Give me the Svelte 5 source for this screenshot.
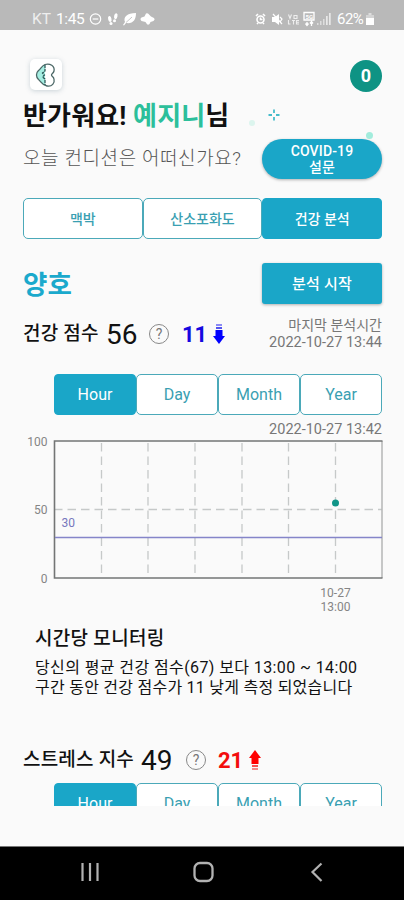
<script>
	const tabs = ['맥박', '산소포화도', '건강 분석'];
	const periods = ['Hour', 'Day', 'Month', 'Year'];
	const gridX = [47.5, 94, 141, 188, 234.5, 281.5];

	let tab = '건강 분석';
	let period = 'Hour';
	let stressPeriod = 'Hour';
</script>

<div class="phone">
	<div class="status">
		<span class="carrier">KT</span>
		<span class="time">1:45</span>
		<svg class="status-left" width="68" height="16" viewBox="0 0 68 16">
			<g fill="none" stroke="#fff" stroke-width="1.2">
				<circle cx="6.5" cy="8" r="5.2" />
				<path d="M3.7 8h5.6" />
			</g>
			<g fill="#fff">
				<ellipse cx="20.8" cy="8" rx="1.7" ry="3" transform="rotate(-12 20.8 8)" />
				<circle cx="22" cy="12.5" r="1.5" />
				<ellipse cx="26.8" cy="5.2" rx="1.7" ry="3" transform="rotate(12 26.8 5.2)" />
				<circle cx="25.5" cy="9.8" r="1.5" />
				<path d="M47 2C38 2 34 6 36 11l-2 3 1 .5 2-2.500C44 13 47 9 47 2z" />
				<path d="M57 2.500q2-1 3.500 1.500l1.500 1.500 3 1.500q1.500 1.500-.5 3l-3 1-1 2q-2 1.500-3-.5l-1-1.500-4-1q-2-2 0-3.500l3-1z" />
			</g>
			<path d="M37 11.500L43 6" stroke="#b9b9b9" stroke-width=".8" />
		</svg>
		<svg class="status-right" width="78" height="18" viewBox="0 0 78 18">
			<g fill="none" stroke="#fff" stroke-width="1.6">
				<circle cx="5.500" cy="9.500" r="3.500" />
				<path d="M1 6l2-2M10 6L8 4M5.500 7.500v2h2M2 14l1-1M9 14l-1-1" />
				<path d="M25 7l2 2-2 3M18 4l9 10" stroke-width="1.200" />
			</g>
			<path d="M17 7h3l4-3v11l-4-3h-3z" fill="#fff" />
			<g fill="none" stroke="#eee" stroke-width="1.100">
				<path d="M33.500 4.500l1.500 4 1.500-4M39 5.500h3v3h-3zM33.500 10v4h2M37 10.500h3M38.500 10.500v4M44 10.500h-2.500v3.500H44M41.500 12.300H44" />
			</g>
			<g fill="none" stroke="#fff" stroke-width="1.300">
				<path d="M49 2.500h10v7.500H49zM52 12v3M50.500 13.500l1.500 2 1.500-2M56.500 16v-4M55 13.500l1.500-2 1.500 2" />
			</g>
			<text x="50.500" y="8.500" fill="#fff" class="tiny">5G</text>
			<path d="M62 13h1.500v2H62zM65 11h1.500v4H65zM68 9h1.500v6H68z" fill="#ddd" />
			<path d="M71 6h1.700v9H71zM74 3h1.700v12H74z" fill="#e8e8e8" />
		</svg>
		<span class="battery-text">62%</span>
		<svg class="battery" width="8" height="12" viewBox="0 0 8 12">
			<path d="M2.500 0h3v2h-3z" fill="#ddd" />
			<path d="M0 2h8v3H0z" fill="#d4d4d4" />
			<path d="M0 5h8v7H0z" fill="#fff" />
		</svg>
	</div>

	<main class="screen">
		<header class="top">
			<div class="logo">
				<svg width="22" height="26" viewBox="0 0 22 26">
					<path d="M10 2.500C6.500 4 6 6.500 3.500 8.500 .8 11 .8 15 3.500 17.500 6 19.500 6.500 22 10 23.500z" fill="#a5eee2" />
					<path d="M10 2.500C6.500 4 6 6.500 3.500 8.500 .8 11 .8 15 3.500 17.500 6 19.500 6.500 23 12 24c5 1 8-3 7-7-.5-2.500-2.500-2.500-2.500-4S18.500 11.500 19 9c1-5-4-8-9-6.500z" fill="none" stroke="#4c6867" stroke-width="1.300" />
					<path d="M10 3v6L7.500 11l2 2-2 2 2.500 2v6" fill="none" stroke="#214e4d" stroke-width="1.200" stroke-dasharray="3 .8" />
				</svg>
			</div>
			<div class="avatar">0</div>
		</header>

		<h1 class="greeting">
			<span class="greeting-text">반가워요! <em>예지니</em>님</span>
			<svg class="sparkle" width="36" height="22" viewBox="0 0 36 22">
				<circle cx="5" cy="17" r="3" fill="#dcf5ee" />
				<path d="M27 3.500v3.500M27 11v3.500M21.500 9H25M29 9h3.500" stroke="#45bccb" stroke-width="1.800" fill="none" />
			</svg>
		</h1>

		<div class="question">
			<span class="question-text">오늘 컨디션은 어떠신가요?</span>
			<div class="survey-wrap">
				<i class="dot"></i>
				<button class="survey">COVID-19<br>설문</button>
			</div>
		</div>

		<div class="tabs">
			{#each tabs as name}
				<button class="tab" class:active={tab === name} on:click={() => (tab = name)}>{name}</button>
			{/each}
		</div>

		<div class="state">
			<strong class="state-text">양호</strong>
			<button class="start">분석 시작</button>
		</div>

		<div class="score">
			<span class="label">건강 점수</span>
			<span class="value">56</span>
			<span class="help">?</span>
			<span class="diff down">11</span>
			<svg class="arrow" width="12" height="20" viewBox="0 0 12 20">
				<path d="M3 0h6v2H3z" fill="#8a8af5" />
				<path d="M3 3h6v2H3z" fill="#5252f0" />
				<path d="M2.500 6h7v6H12l-6 8-6-8h2.500z" fill="#00f" />
			</svg>
			<div class="last">마지막 분석시간<br><span class="last-date">2022-10-27 13:44</span></div>
		</div>

		<div class="periods">
			{#each periods as name}
				<button class="period" class:active={period === name} on:click={() => (period = name)}>{name}</button>
			{/each}
		</div>

		<div class="chart-date">2022-10-27 13:42</div>

		<svg class="chart" width="404" height="180" viewBox="-54 -5 404 180">
			<g stroke="#c6c9c9" stroke-width="1.300" stroke-dasharray="8.500 5">
				{#each gridX as x}
					<line x1={x} y1="2" x2={x} y2="137" />
				{/each}
				<line x1="0" y1="68.500" x2="328" y2="68.500" />
			</g>
			<path d="M328 0V137" stroke="#b4b6b6" stroke-width="1.500" />
			<path d="M328.500 0H.5V137H328.500" fill="none" stroke="#737575" stroke-width="1.600" />
			<line x1="1" y1="96.500" x2="328" y2="96.500" stroke="#8585c9" stroke-width="1.300" />
			<circle cx="281.500" cy="62" r="3.500" fill="#109588" />
			<g class="axis" text-anchor="end">
				<text x="-6.500" y="4.500">100</text>
				<text x="-6.500" y="73">50</text>
				<text x="-6.500" y="141.500">0</text>
			</g>
			<text class="limit" x="7.500" y="86">30</text>
			<g class="axis" text-anchor="middle">
				<text x="281.500" y="155.500">10-27</text>
				<text x="281.500" y="170">13:00</text>
			</g>
		</svg>

		<section class="monitoring">
			<h2>시간당 모니터링</h2>
			<p class="line1">당신의 평균 건강 점수(67) 보다 13:00 ~ 14:00</p>
			<p class="line2">구간 동안 건강 점수가 11 낮게 측정 되었습니다</p>
		</section>

		<div class="score stress">
			<span class="label">스트레스 지수</span>
			<span class="value">49</span>
			<span class="help">?</span>
			<span class="diff up">21</span>
			<svg class="arrow" width="12" height="20" viewBox="0 0 12 20">
				<path d="M6 0l6 8H9.500v6h-7V8H0z" fill="#f00" />
				<path d="M3 15h6v2H3z" fill="#f55252" />
				<path d="M3 18h6v2H3z" fill="#f58a8a" />
			</svg>
		</div>

		<div class="periods">
			{#each periods as name}
				<button class="period" class:active={stressPeriod === name} on:click={() => (stressPeriod = name)}>{name}</button>
			{/each}
		</div>
	</main>

	<nav class="nav">
		<svg width="404" height="53" viewBox="0 0 404 53" fill="none" stroke="#b2b2b2">
			<path d="M82.500 16v18M90 16v18M97.500 16v18" stroke-width="2.200" />
			<rect x="194.500" y="16" width="18" height="18" rx="5.500" stroke-width="2.300" />
			<path d="M321.500 16.500L312.500 25l9 9" stroke-width="2.200" />
		</svg>
	</nav>
</div>

<style>
	:global(body) {
		margin: 0;
	}

	.phone {
		display: flex;
		flex-direction: column;
		width: 404px;
		height: 900px;
		overflow: hidden;
		background: #fafafa;
		color: #111;
		font-family: Roboto, 'Noto Sans CJK KR', sans-serif;
	}

	button {
		display: block;
		box-sizing: border-box;
		margin: 0;
		padding: 0;
		border: 0;
		font-family: inherit;
		color: #fff;
		background: #1aa6c8;
	}

	.status {
		display: flex;
		align-items: center;
		flex: none;
		box-sizing: border-box;
		height: 30px;
		padding: 8px 0 0 32px;
		background: #b9b9b9;
		color: #fff;
		font-size: 15.5px;
		line-height: 20px;
	}

	.carrier {
		width: 24px;
		color: #eee;
	}

	.time {
		width: 33px;
		letter-spacing: -.4px;
	}

	.status-left {
		margin-right: 98px;
	}

	.status-right {
		margin-right: 4px;
	}

	.tiny {
		font-size: 6px;
		font-weight: 700;
	}

	.battery-text {
		width: 29px;
		font-size: 15px;
		letter-spacing: -.5px;
	}

	.screen {
		flex: none;
		box-sizing: border-box;
		height: 776px;
		padding: 29px 22px 0 23px;
		overflow: hidden;
	}

	.top {
		display: flex;
		justify-content: space-between;
		height: 42px;
		padding-left: 7px;
	}

	.logo {
		display: flex;
		align-items: center;
		justify-content: center;
		width: 32px;
		height: 31px;
		border-radius: 5px;
		background: #fff;
		box-shadow: 0 1px 5px rgba(80, 110, 130, .28);
	}

	.avatar {
		width: 32px;
		height: 32px;
		margin-top: 1px;
		border-radius: 50%;
		background: #0e9384;
		color: #fff;
		font-size: 18px;
		font-weight: 700;
		line-height: 32px;
		text-align: center;
	}

	.greeting {
		display: flex;
		height: 38px;
		margin: 0;
		font-size: 26px;
		font-weight: 700;
		line-height: 31px;
		white-space: nowrap;
	}

	.greeting-text {
		width: 224px;
		letter-spacing: .15px;
	}

	.greeting em {
		font-style: normal;
		color: #2cbf9b;
	}

	.sparkle {
		margin-top: 5px;
	}

	.question {
		display: flex;
		justify-content: space-between;
		height: 59px;
	}

	.question-text {
		color: #555;
		font-size: 19px;
		font-weight: 300;
		letter-spacing: .6px;
		line-height: 40px;
		white-space: nowrap;
	}

	.survey-wrap {
		position: relative;
	}

	.dot {
		position: absolute;
		top: -7px;
		right: 9px;
		width: 7px;
		height: 7px;
		border-radius: 50%;
		background: #a2ecdc;
	}

	.survey {
		position: relative;
		width: 120px;
		height: 40px;
		border-radius: 20px;
		font-size: 14px;
		font-weight: 500;
		letter-spacing: .15px;
		line-height: 16px;
		box-shadow: 0 1px 3px rgba(0, 0, 0, .3);
	}

	.tabs,
	.periods {
		display: flex;
	}

	.tab,
	.period {
		flex: 1;
		border: 1px solid #4ba9b9;
		border-radius: 5px;
		background: #fff;
		color: #3a9fb2;
	}

	.tab {
		height: 41px;
		padding-bottom: 2px;
		font-size: 14px;
		font-weight: 500;
	}

	.period {
		height: 41px;
		font-size: 16px;
	}

	.tab.active,
	.period.active {
		border-color: #1aa6c8;
		border-radius: 4px;
		background: #1aa6c8;
		color: #fff;
	}

	.state {
		display: flex;
		justify-content: space-between;
		height: 41px;
		margin-top: 24px;
	}

	.state-text {
		font-size: 26.5px;
		line-height: 43px;
		color: #1ba9cc;
	}

	.start {
		width: 120px;
		height: 41px;
		padding-bottom: 2px;
		border-radius: 3px;
		font-size: 15px;
		font-weight: 500;
		letter-spacing: .2px;
		box-shadow: 0 1px 3px rgba(0, 0, 0, .3);
	}

	.score {
		display: flex;
		align-items: center;
		height: 40px;
		margin: 10px 0 20px;
		white-space: nowrap;
	}

	.label {
		width: 83px;
		font-size: 19px;
		font-weight: 500;
		letter-spacing: .2px;
		line-height: 24px;
	}

	.value {
		width: 43px;
		font-size: 28px;
	}

	.help {
		box-sizing: border-box;
		width: 20px;
		height: 20px;
		margin-right: 13px;
		border: 1px solid #888;
		border-radius: 50%;
		color: #777;
		font-size: 14px;
		line-height: 18px;
		text-align: center;
	}

	.diff {
		width: 31px;
		font-size: 22px;
		font-weight: 700;
	}

	.down {
		color: #1508e0;
	}

	.up {
		color: #f30d0d;
	}

	.last {
		flex: 1;
		color: #777;
		font-size: 14px;
		line-height: 17px;
		text-align: right;
	}

	.last-date,
	.chart-date {
		font-size: 14.5px;
	}

	.periods {
		margin-left: 31px;
	}

	.chart-date {
		height: 21px;
		color: #777;
		line-height: 30px;
		text-align: right;
	}

	.chart {
		display: block;
		margin-left: -23px;
	}

	.axis {
		fill: #858585;
		font-size: 12px;
	}

	.limit {
		fill: #7777bd;
		font-size: 12px;
	}

	.monitoring {
		height: 119px;
		padding: 11px 0 0 12px;
		white-space: nowrap;
	}

	h2 {
		margin: 0 0 7px;
		font-size: 19px;
		font-weight: 500;
		letter-spacing: .3px;
		line-height: 24px;
	}

	p {
		margin: 0;
		font-size: 16px;
		font-weight: 400;
		line-height: 20px;
	}

	.line1 {
		letter-spacing: .4px;
	}

	.line2 {
		letter-spacing: .25px;
	}

	.stress {
		margin: -6px 0 3px;
	}

	.stress .label {
		width: 118px;
	}

	.stress .value {
		width: 45px;
	}

	.stress .help {
		margin-right: 12px;
	}

	.nav {
		flex: none;
		height: 53px;
		margin-top: 40px;
		border-top: 1px solid #777;
		background: #000;
	}
</style>
